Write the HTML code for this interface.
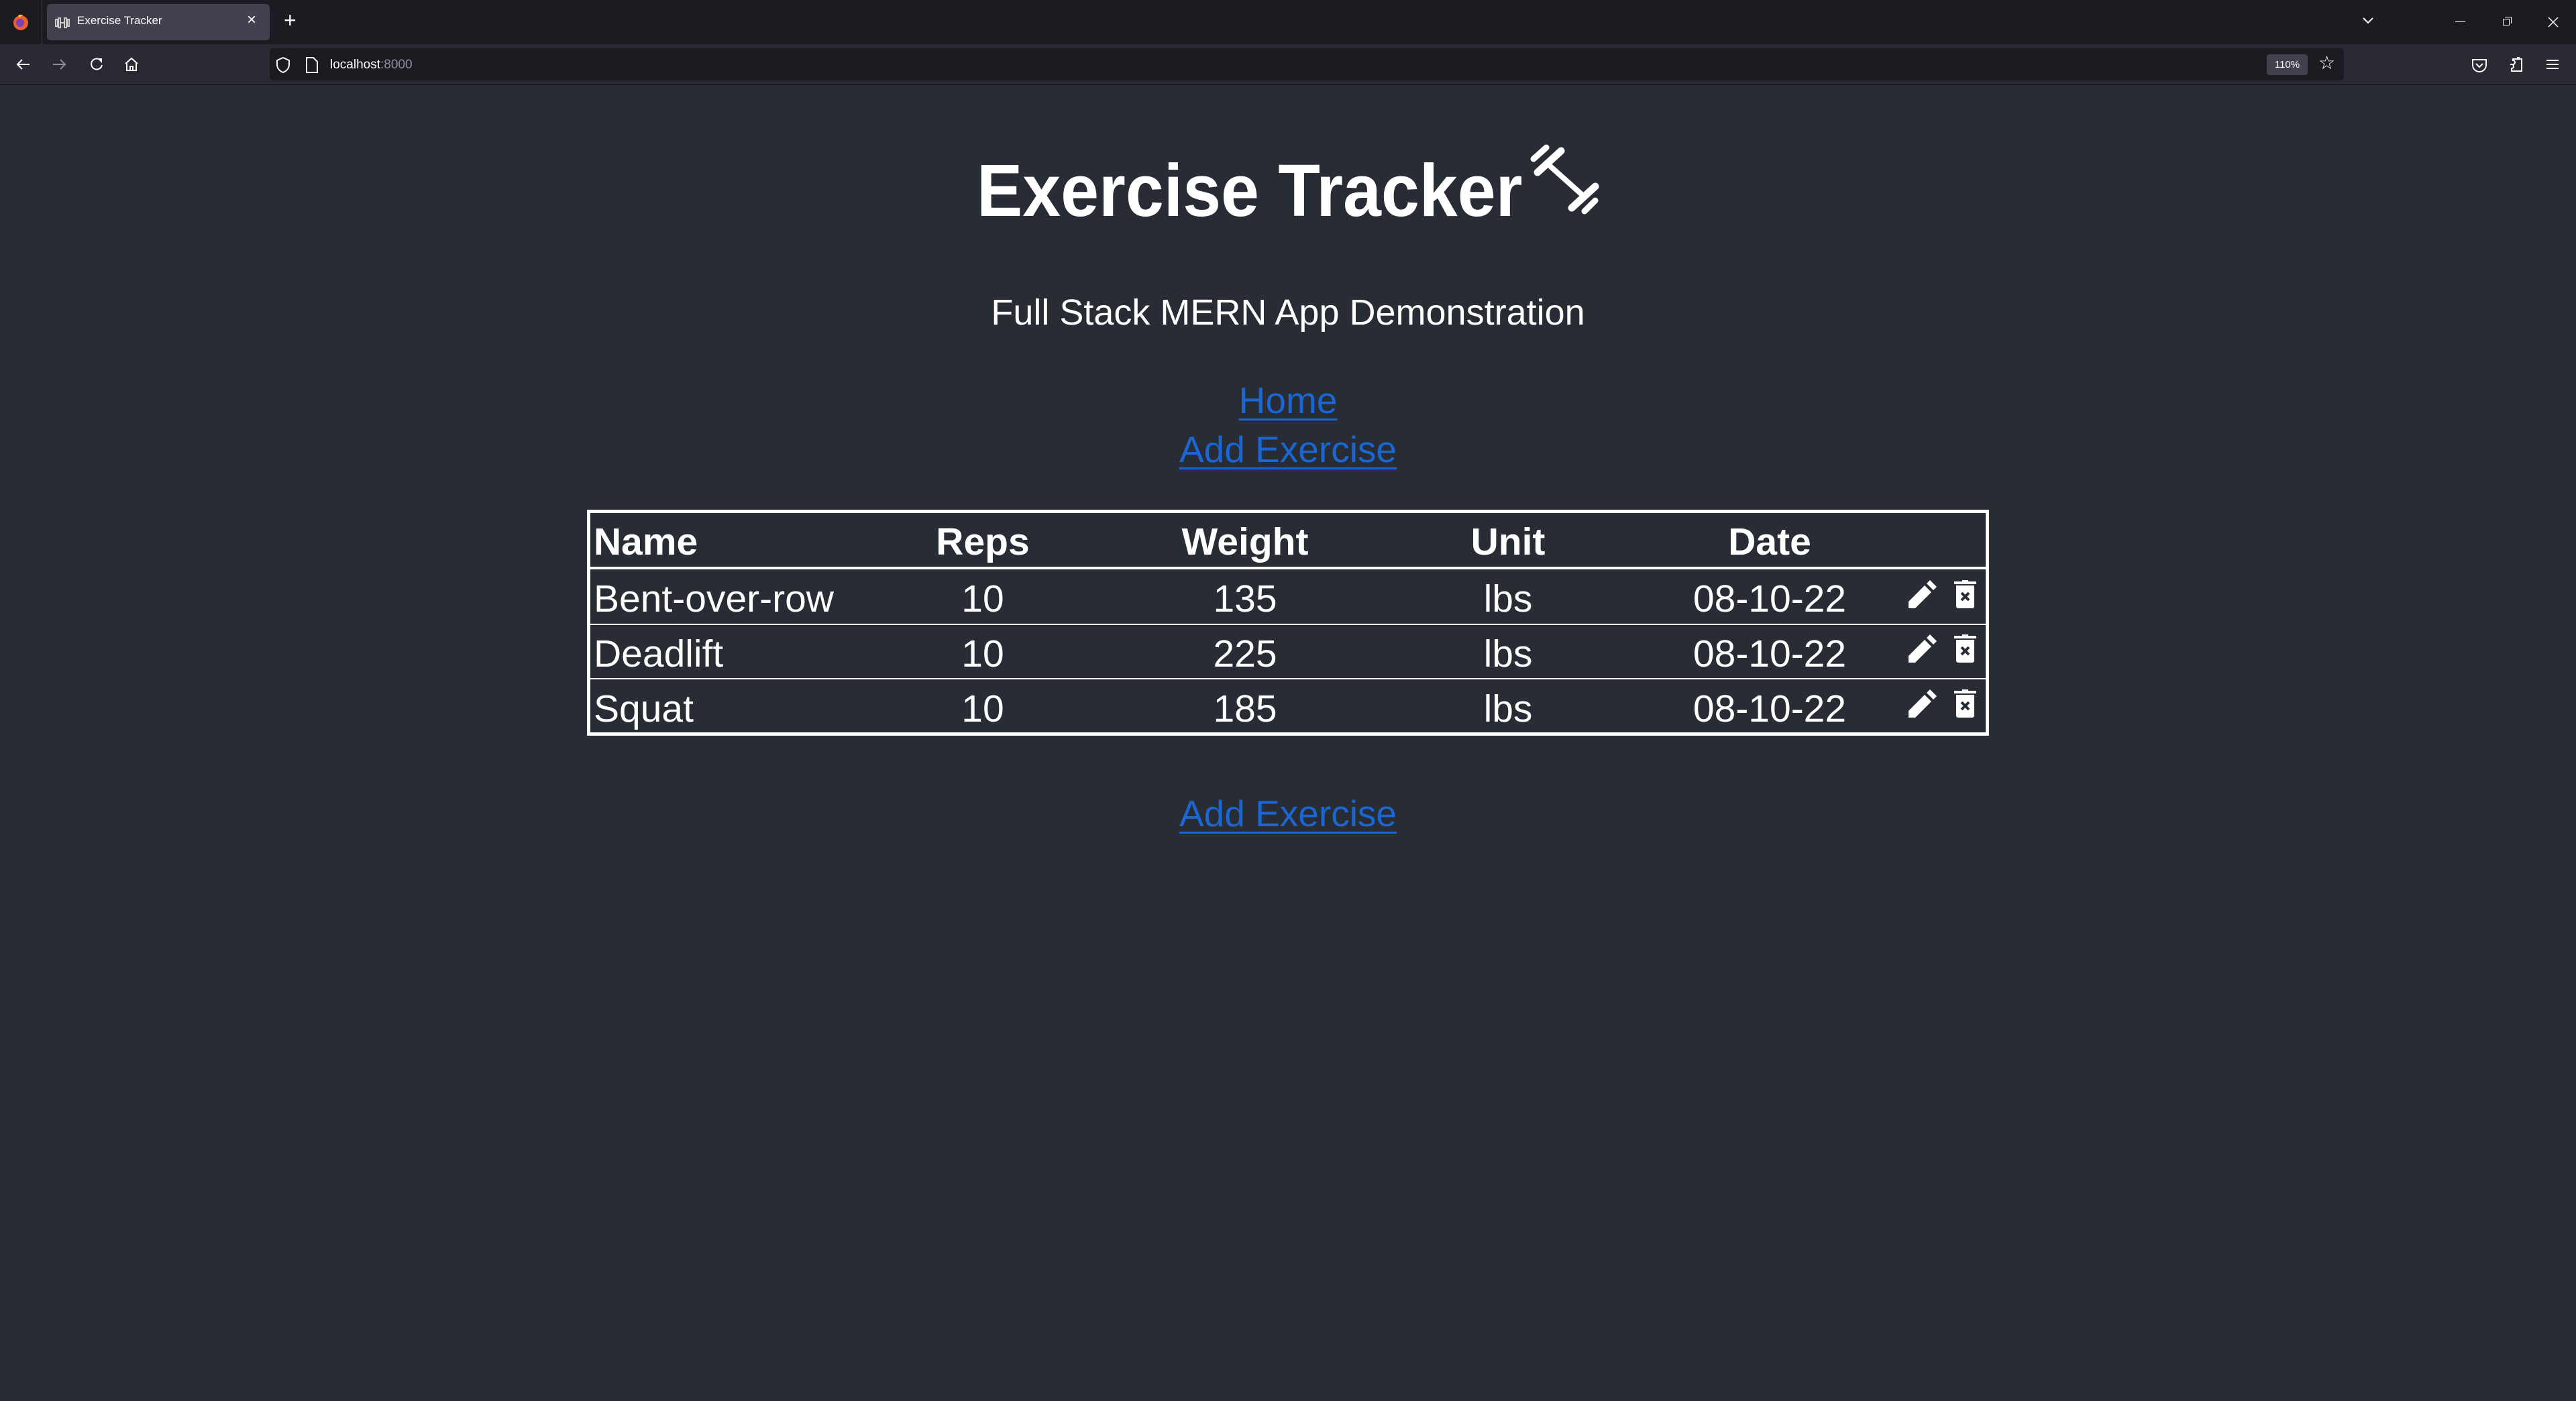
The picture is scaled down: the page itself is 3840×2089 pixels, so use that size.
<!DOCTYPE html>
<html><head><meta charset="utf-8">
<style>
*{margin:0;padding:0;box-sizing:border-box}
html,body{width:3840px;height:2089px;overflow:hidden;background:#282c34;font-family:"Liberation Sans",sans-serif;color:#fff}
.a{position:absolute;white-space:nowrap;line-height:1}
.c{transform:translateX(-50%)}
.lnk{color:#1a66d2;text-decoration:underline;text-decoration-thickness:3px;text-underline-offset:8px}
.cell{font-size:57px}
.hd{font-weight:bold}
</style></head><body>
<!-- tab bar -->
<div class="a" style="left:0;top:0;width:3840px;height:66px;background:#1c1b22"></div>
<div class="a" style="left:62px;top:0;width:1px;height:66px;background:#3a3944"></div>
<svg class="a" style="left:17px;top:19px" width="28" height="28" viewBox="0 0 28 28"><circle cx="14" cy="15" r="11" fill="#e8612c"/><circle cx="13" cy="15" r="6" fill="#7b3fb6"/><path d="M10 4 Q14 1 18 5 Q14 4 12 8Z" fill="#ffbd3a"/></svg>
<div class="a" style="left:70px;top:6px;width:332px;height:54px;background:#42414d;border-radius:5px"></div>
<svg class="a" style="left:81px;top:26px" width="24" height="16" viewBox="0 0 24 16"><g stroke="#ccc" stroke-width="2" fill="none"><rect x="2" y="3" width="3" height="10"/><rect x="6" y="1" width="3" height="14"/><rect x="15" y="1" width="3" height="14"/><rect x="19" y="3" width="3" height="10"/><path d="M9 8h6"/></g></svg>
<div class="a" style="left:115px;top:22px;font-size:17px;color:#fbfbfe">Exercise Tracker</div>
<div class="a" style="left:368px;top:18px;font-size:24px;color:#fbfbfe">×</div>
<div class="a" style="left:423px;top:14px;font-size:32px;color:#fbfbfe">+</div>
<svg class="a" style="left:3520px;top:24px" width="20" height="14"><path d="M3 3l7 7 7-7" stroke="#fbfbfe" stroke-width="2" fill="none"/></svg>
<div class="a" style="left:3660px;top:32px;width:15px;height:1px;background:#fbfbfe"></div>
<div class="a" style="left:3731px;top:28px;width:10px;height:10px;border:1px solid #fbfbfe"></div>
<div class="a" style="left:3734px;top:25px;width:10px;height:10px;border-top:1px solid #fbfbfe;border-right:1px solid #fbfbfe"></div>
<svg class="a" style="left:3797px;top:24px" width="18" height="18"><path d="M2 2l14 14M16 2L2 16" stroke="#fbfbfe" stroke-width="1.5"/></svg>
<!-- toolbar -->
<div class="a" style="left:0;top:66px;width:3840px;height:60px;background:#2b2a33"></div>
<div class="a" style="left:0;top:126px;width:3840px;height:1px;background:#0c0c0d"></div>
<svg class="a" style="left:22px;top:86px" width="24" height="20"><path d="M22 10H4M11 3L4 10l7 7" stroke="#fbfbfe" stroke-width="2" fill="none"/></svg>
<svg class="a" style="left:77px;top:86px" width="24" height="20"><path d="M2 10h18M13 3l7 7-7 7" stroke="#8f8f9d" stroke-width="2" fill="none"/></svg>
<svg class="a" style="left:132px;top:84px" width="24" height="24"><path d="M18 6A8 8 0 1 0 20 13" stroke="#fbfbfe" stroke-width="2" fill="none"/><path d="M13 3h7v7z" fill="#fbfbfe"/></svg>
<svg class="a" style="left:184px;top:84px" width="24" height="24"><path d="M3 11L12 3l9 8M5 9v12h14V9M10 21v-6h4v6" stroke="#fbfbfe" stroke-width="2" fill="none"/></svg>
<div class="a" style="left:402px;top:72px;width:3092px;height:48px;background:#1c1b22;border-radius:5px"></div>
<svg class="a" style="left:410px;top:84px" width="24" height="26"><path d="M12 2L3 6v6c0 6 4 10 9 12 5-2 9-6 9-12V6z" stroke="#fbfbfe" stroke-width="2" fill="none"/></svg>
<svg class="a" style="left:455px;top:84px" width="20" height="26"><path d="M2 2h10l6 6v16H2z" stroke="#fbfbfe" stroke-width="2" fill="none"/></svg>
<div class="a" style="left:492px;top:87px;font-size:19px;color:#fbfbfe">localhost<span style="color:#8f8f9d">:8000</span></div>
<div class="a" style="left:3379px;top:81px;width:61px;height:31px;background:#42414d;border-radius:4px;font-size:15px;color:#fbfbfe;text-align:center;line-height:31px">110%</div>
<div class="a" style="left:3456px;top:80px;font-size:28px;color:#fbfbfe">☆</div>
<svg class="a" style="left:3684px;top:86px" width="24" height="22"><path d="M2 3h20v8a10 10 0 0 1-20 0z" stroke="#fbfbfe" stroke-width="2" fill="none"/><path d="M7 9l5 5 5-5" stroke="#fbfbfe" stroke-width="2" fill="none"/></svg>
<svg class="a" style="left:3740px;top:84px" width="24" height="26"><path d="M2 12h4a3 3 0 1 0 0-6V4h7V2h2v2h4v18H4v-4a3 3 0 1 0 0-6" stroke="#fbfbfe" stroke-width="2" fill="none"/></svg>
<svg class="a" style="left:3795px;top:88px" width="20" height="16"><path d="M1 2h18M1 8h18M1 14h18" stroke="#fbfbfe" stroke-width="2"/></svg>

<!-- page -->
<div class="a" style="left:1456px;top:230px;width:821px;height:110px;overflow:visible">
<div style="font-size:110px;font-weight:bold;line-height:1;transform:scaleX(0.93);transform-origin:left top;white-space:nowrap">Exercise Tracker</div></div>
<svg class="a" style="left:2270px;top:205px" width="125" height="125" viewBox="2270 205 125 125">
<g stroke="#fff" stroke-linecap="round" fill="none">
<path d="M2310 247L2358 290" stroke-width="8"/>
<path d="M2292 257L2327 225M2343 310L2378 278" stroke-width="11"/>
<path d="M2286 237L2305 220M2362 315L2378 299" stroke-width="9"/>
</g></svg>
<div class="a c" style="left:1920px;top:439px;font-size:54px">Full Stack MERN App Demonstration</div>
<div class="a c lnk" style="left:1920px;top:570px;font-size:55px">Home</div>
<div class="a c lnk" style="left:1920px;top:643px;font-size:55px">Add Exercise</div>

<!-- table -->
<div class="a" style="left:875px;top:760px;width:2090px;height:337px;border:5px solid #fff"></div>
<div class="a" style="left:875px;top:845px;width:2090px;height:4px;background:#fff"></div>
<div class="a" style="left:875px;top:930px;width:2090px;height:2px;background:#fff"></div>
<div class="a" style="left:875px;top:1011px;width:2090px;height:2px;background:#fff"></div>

<div class="a cell hd" style="left:885px;top:780px">Name</div>
<div class="a cell hd c" style="left:1465px;top:780px">Reps</div>
<div class="a cell hd c" style="left:1856px;top:780px">Weight</div>
<div class="a cell hd c" style="left:2248px;top:780px">Unit</div>
<div class="a cell hd c" style="left:2638px;top:780px">Date</div>

<div class="a cell" style="left:885px;top:865px">Bent-over-row</div>
<div class="a cell c" style="left:1465px;top:865px">10</div>
<div class="a cell c" style="left:1856px;top:865px">135</div>
<div class="a cell c" style="left:2248px;top:865px">lbs</div>
<div class="a cell c" style="left:2638px;top:865px">08-10-22</div>

<div class="a cell" style="left:885px;top:947px">Deadlift</div>
<div class="a cell c" style="left:1465px;top:947px">10</div>
<div class="a cell c" style="left:1856px;top:947px">225</div>
<div class="a cell c" style="left:2248px;top:947px">lbs</div>
<div class="a cell c" style="left:2638px;top:947px">08-10-22</div>

<div class="a cell" style="left:885px;top:1029px">Squat</div>
<div class="a cell c" style="left:1465px;top:1029px">10</div>
<div class="a cell c" style="left:1856px;top:1029px">185</div>
<div class="a cell c" style="left:2248px;top:1029px">lbs</div>
<div class="a cell c" style="left:2638px;top:1029px">08-10-22</div>

<!-- icons -->
<svg width="0" height="0" style="position:absolute"><defs>
<g id="pen"><path d="M0 42V32L24 8l10 10L10 42z M27 5l5-5 10 10-5 5z" fill="#fff"/></g>
<g id="trash"><path d="M0 2h33v4H0z M12 0h9v3h-9z M3 8h27v31a3 3 0 0 1-3 3H6a3 3 0 0 1-3-3z" fill="#fff"/><path d="M11 19l11 11M22 19L11 30" stroke="#282c34" stroke-width="4"/></g>
</defs></svg>
<svg class="a" style="left:2845px;top:865px" width="44" height="44"><use href="#pen"/></svg>
<svg class="a" style="left:2913px;top:865px" width="34" height="44"><use href="#trash"/></svg>
<svg class="a" style="left:2845px;top:946px" width="44" height="44"><use href="#pen"/></svg>
<svg class="a" style="left:2913px;top:946px" width="34" height="44"><use href="#trash"/></svg>
<svg class="a" style="left:2845px;top:1028px" width="44" height="44"><use href="#pen"/></svg>
<svg class="a" style="left:2913px;top:1028px" width="34" height="44"><use href="#trash"/></svg>

<div class="a c lnk" style="left:1920px;top:1186px;font-size:55px">Add Exercise</div>
</body></html>
